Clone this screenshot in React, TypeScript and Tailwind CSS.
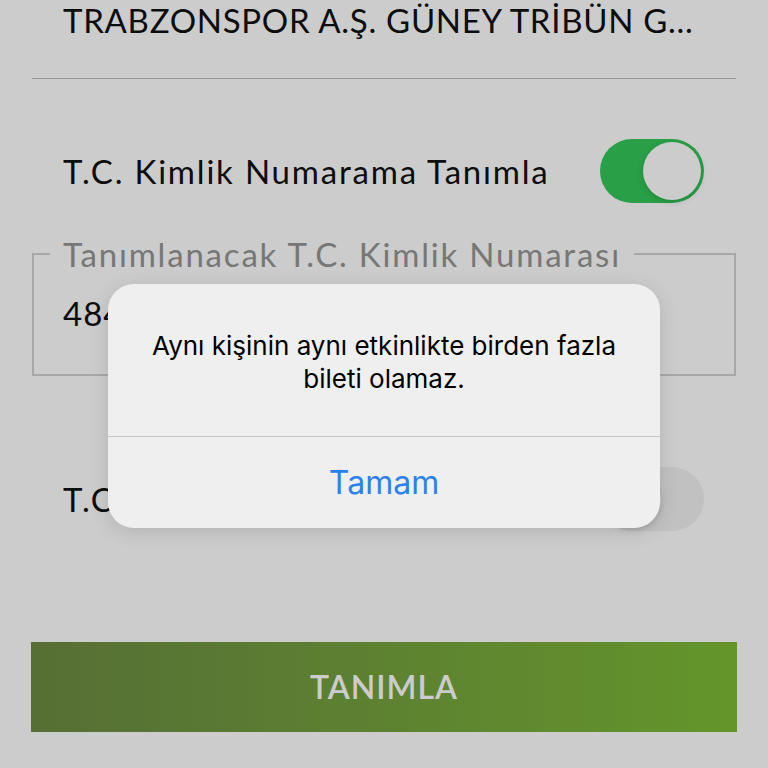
import React from 'react';

// iOS-style switch used in the form rows
function Toggle({ on }: { on: boolean }) {
  return (
    <div
      className={`flex h-[64px] w-[104px] shrink-0 items-center rounded-full p-[3px] ${
        on ? 'justify-end bg-[#34c759]' : 'justify-start bg-[#f2f2f2]'
      }`}>
      <span className="h-[58px] w-[58px] rounded-full bg-white shadow-[0_2px_6px_rgba(0,0,0,0.15)]" />
    </div>
  );
}

export default function App() {
  return (
    <div className="relative h-[768px] w-[768px] overflow-hidden bg-white font-['Lato',sans-serif] text-[#111]">
      {/* Form */}
      <div className="flex flex-col px-[32px]">
        <h1 className="whitespace-nowrap pl-[31px] text-[33px] leading-[40px] tracking-[0.7px]">
          TRABZONSPOR A.Ş. GÜNEY TRİBÜN G...
        </h1>
        <div className="mt-[38px] border-b border-[#c0c0c0]" />

        <div className="mt-[60px] flex items-center justify-between pl-[31px] pr-[32px]">
          <span className="whitespace-nowrap text-[33px] leading-[36px] tracking-[1.8px]">T.C. Kimlik Numarama Tanımla</span>
          <Toggle on />
        </div>

        <fieldset className="mt-[32px] h-[141px] border-2 border-[#d3d3d3] px-0">
          <legend className="ml-[16px] whitespace-nowrap px-[13px] text-[33px] leading-[38px] tracking-[1.8px] text-[#959595]">
            Tanımlanacak T.C. Kimlik Numarası
          </legend>
          <div className="mt-[22px] pl-[29px] text-[33px] leading-[36px] tracking-[1px]">48412367490</div>
        </fieldset>

        <div className="mt-[91px] flex items-center justify-between pl-[31px] pr-[32px]">
          <span className="whitespace-nowrap text-[33px] leading-[36px] tracking-[1.8px]">T.C. Vatandaşı Değilim</span>
          <Toggle on={false} />
        </div>

        <button
          type="button"
          className="mt-[111px] ml-[-1px] flex h-[90px] w-[706px] items-center justify-center bg-gradient-to-r from-[#6c8b42] to-[#7dbb35] text-[32px] font-semibold tracking-[1px] text-white">
          TANIMLA
        </button>
      </div>

      {/* Dimmed backdrop + alert */}
      <div className="absolute inset-0 flex justify-center bg-black/20 pt-[284px]">
        <div className="flex h-[244px] w-[552px] flex-col overflow-hidden rounded-[26px] bg-[#efefef] font-['Inter',sans-serif] shadow-[0_4px_20px_rgba(0,0,0,0.12)]">
          <div className="flex flex-1 items-center justify-center px-[30px] pt-[4px] text-center text-[26px] leading-[33px] text-black">
            Aynı kişinin aynı etkinlikte birden fazla
            <br />
            bileti olamaz.
          </div>
          <div className="h-[1px] bg-[#c6c6c6]" />
          <div className="flex h-[91px] items-center justify-center text-[32px] text-[#2c82ea]">Tamam</div>
        </div>
      </div>
    </div>
  );
}
